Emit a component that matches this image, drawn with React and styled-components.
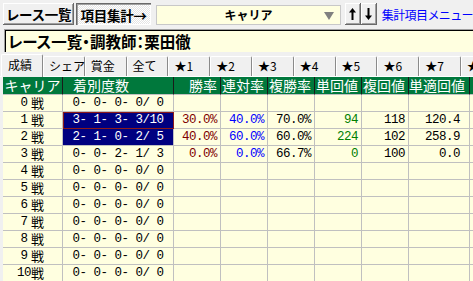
import styled, { createGlobalStyle } from "styled-components";

const GlobalStyle = createGlobalStyle`
  html, body {
    margin: 0;
    padding: 0;
    background: #f0f0f0;
    overflow: hidden;
  }
  body {
    font-family: "Noto Sans CJK JP", "Noto Sans", sans-serif;
  }
`;

const columns = [
  { label: "キャリア", width: 60, headAlign: "center" },
  { label: "着別度数", width: 111, headAlign: "left", headPad: 10 },
  { label: "勝率", width: 47, color: "#800000" },
  { label: "連対率", width: 47, color: "#0000ff" },
  { label: "複勝率", width: 47, color: "#000" },
  { label: "単回値", width: 47, color: "#008000" },
  { label: "複回値", width: 47, color: "#000" },
  { label: "単適回値", width: 61, color: "#000", pad: 9, headPad: 4 },
  { label: "", width: 40 },
];

const rows = [
  { count: "0", record: "0- 0- 0- 0/ 0", vals: [] },
  {
    count: "1",
    record: "3- 1- 3- 3/10",
    vals: ["30.0%", "40.0%", "70.0%", "94", "118", "120.4"],
    selected: true,
    focused: true,
  },
  {
    count: "2",
    record: "2- 1- 0- 2/ 5",
    vals: ["40.0%", "60.0%", "60.0%", "224", "102", "258.9"],
    selected: true,
  },
  { count: "3", record: "0- 0- 2- 1/ 3", vals: ["0.0%", "0.0%", "66.7%", "0", "100", "0.0"] },
  { count: "4", record: "0- 0- 0- 0/ 0", vals: [] },
  { count: "5", record: "0- 0- 0- 0/ 0", vals: [] },
  { count: "6", record: "0- 0- 0- 0/ 0", vals: [] },
  { count: "7", record: "0- 0- 0- 0/ 0", vals: [] },
  { count: "8", record: "0- 0- 0- 0/ 0", vals: [] },
  { count: "9", record: "0- 0- 0- 0/ 0", vals: [] },
  { count: "10", record: "0- 0- 0- 0/ 0", vals: [] },
];

const tabs = ["成績", "シェア", "賞金", "全て", "★1", "★2", "★3", "★4", "★5", "★6", "★7", "★8"];

const gridCols = columns.map((c) => `${c.width}px`).join(" ");

const UpArrow = () => (
  <svg width="7" height="12" viewBox="0 0 7 12">
    <polygon points="3.5,0 0,4.5 7,4.5" fill="#000" />
    <rect x="2.5" y="4" width="2" height="8" fill="#000" />
  </svg>
);

const DownArrow = () => (
  <svg width="7" height="12" viewBox="0 0 7 12">
    <polygon points="3.5,12 0,7.5 7,7.5" fill="#000" />
    <rect x="2.5" y="0" width="2" height="8" fill="#000" />
  </svg>
);

const App = () => {
  return (
    <Page>
      <GlobalStyle />
      <Toolbar>
        <ToolButton>レース一覧</ToolButton>
        <ToolButton $pressed>項目集計→</ToolButton>
        <Combo>
          <ComboText>キャリア</ComboText>
          <ComboArrow />
        </Combo>
        <ArrowPair>
          <ArrowButton>
            <UpArrow />
          </ArrowButton>
          <ArrowButton>
            <DownArrow />
          </ArrowButton>
        </ArrowPair>
        <MenuLink>集計項目メニュー</MenuLink>
      </Toolbar>
      <TitleBox>レース一覧・調教師：栗田徹</TitleBox>
      <TabBar>
        {tabs.map((t, i) => (
          <Tab key={t} $active={i === 0}>
            {t}
          </Tab>
        ))}
      </TabBar>
      <Grid>
        <Row>
          {columns.map((c, i) => (
            <HeadCell key={i} $align={c.headAlign || "right"} $pad={c.headPad ?? 3}>
              {c.label}
            </HeadCell>
          ))}
        </Row>
        {rows.map((r) => (
          <Row key={r.count}>
            <NameCell>
              <CountText>{r.count}</CountText>
              <SenText>戦</SenText>
            </NameCell>
            <RecordCell $selected={r.selected} $focused={r.focused}>
              {r.record}
            </RecordCell>
            {columns.slice(2, 8).map((c, i) => (
              <NumCell key={i} $color={c.color} $pad={c.pad ?? 3}>
                {r.vals[i] || ""}
              </NumCell>
            ))}
            <NumCell />
          </Row>
        ))}
      </Grid>
    </Page>
  );
};

export default App;

const Page = styled.div`
  width: 473px;
  height: 281px;
  overflow: hidden;
  background: #f0f0f0;
`;

const Toolbar = styled.div`
  display: flex;
  align-items: center;
  height: 22px;
  padding: 3px 0 0 3px;
  white-space: nowrap;
`;

const ToolButton = styled.div`
  box-sizing: border-box;
  height: 22px;
  width: ${(p) => (p.$pressed ? "76px" : "72px")};
  margin-right: ${(p) => (p.$pressed ? "5px" : "2px")};
  display: flex;
  align-items: center;
  justify-content: center;
  font-size: 13.5px;
  font-weight: 700;
  color: #000;
  letter-spacing: -0.3px;
  background: ${(p) =>
    p.$pressed
      ? "repeating-conic-gradient(#ffffff 0 25%, #e4e4e4 0 50%) 0 0 / 2px 2px"
      : "#f0f0f0"};
  box-shadow: ${(p) =>
    p.$pressed
      ? "inset 1px 1px #696969, inset 2px 2px #a0a0a0, inset -1px -1px #ffffff"
      : "inset -1px -1px #696969, inset 1px 1px #ffffff, inset -2px -2px #a0a0a0"};
  padding-top: ${(p) => (p.$pressed ? "1px" : "0")};
`;

const Combo = styled.div`
  box-sizing: border-box;
  position: relative;
  width: 187px;
  height: 20px;
  margin-top: 1px;
  background: #ffffe0;
  border: 1px solid #c8c8c8;
  display: flex;
  align-items: center;
  justify-content: center;
`;

const ComboText = styled.span`
  font-size: 12px;
  font-weight: 700;
  color: #000;
`;

const ComboArrow = styled.span`
  position: absolute;
  right: 6px;
  top: 6px;
  width: 0;
  height: 0;
  border-left: 5.5px solid transparent;
  border-right: 5.5px solid transparent;
  border-top: 8px solid #808080;
`;

const ArrowPair = styled.div`
  display: flex;
  margin-left: 4px;
`;

const ArrowButton = styled.div`
  box-sizing: border-box;
  width: 16px;
  height: 22px;
  display: flex;
  align-items: center;
  justify-content: center;
  background: #f0f0f0;
  box-shadow: inset -1px -1px #696969, inset 1px 1px #ffffff, inset -2px -2px #a0a0a0;
`;

const MenuLink = styled.div`
  margin-left: 5px;
  font-size: 12px;
  color: #0000ff;
  letter-spacing: -0.6px;
`;

const TitleBox = styled.div`
  box-sizing: border-box;
  margin: 4px 0 0 4px;
  height: 23px;
  width: 475px;
  background: #ffffe0;
  border-top: 1px solid #a0a0a0;
  border-left: 1px solid #a0a0a0;
  box-shadow: inset 1px 1px #000;
  padding-left: 3px;
  display: flex;
  align-items: center;
  font-size: 15.5px;
  font-weight: 700;
  color: #000;
  font-feature-settings: "palt";
  white-space: nowrap;
`;

const TabBar = styled.div`
  display: flex;
  align-items: flex-end;
  height: 24px;
  padding-left: 1px;
  border-bottom: 1px solid #ffffff;
  white-space: nowrap;
`;

const Tab = styled.div`
  box-sizing: border-box;
  flex: none;
  width: ${(p) => (p.$active ? "42px" : "41.8px")};
  height: ${(p) => (p.$active ? "23px" : "20px")};
  margin-bottom: ${(p) => (p.$active ? "-1px" : "0")};
  padding-left: ${(p) => (p.$active ? "6px" : "5px")};
  background: #f0f0f0;
  border-top: 1px solid #ffffff;
  border-left: 1px solid #ffffff;
  border-right: 1px solid #8a8a8a;
  border-radius: 2px 2px 0 0;
  font-size: 12px;
  line-height: ${(p) => (p.$active ? "19px" : "17px")};
  color: #000;
  position: relative;
  z-index: ${(p) => (p.$active ? 1 : 0)};
`;

const Grid = styled.div`
  margin-left: 3px;
  width: 470px;
`;

const Row = styled.div`
  display: grid;
  grid-template-columns: ${gridCols};
`;

const HeadCell = styled.div`
  box-sizing: border-box;
  height: 18px;
  background: #00783c;
  color: #ffffff;
  border-right: 1px solid #1a1a1a;
  border-bottom: 1px solid #c0c0c0;
  font-size: 14px;
  line-height: 17px;
  text-align: ${(p) => p.$align};
  padding: ${(p) =>
    p.$align === "right" ? `0 ${p.$pad}px 0 0` : p.$align === "left" ? `0 0 0 ${p.$pad}px` : "0"};
  white-space: nowrap;
  overflow: hidden;
`;

const BodyCell = styled.div`
  box-sizing: border-box;
  height: 17px;
  background: #ffffe0;
  border-right: 1px solid #c0c0c0;
  border-bottom: 1px solid #c0c0c0;
  line-height: 16px;
  white-space: pre;
  overflow: hidden;
`;

const NameCell = styled(BodyCell)`
  display: flex;
  align-items: center;
  padding-left: 14px;
  color: #000;
`;

const CountText = styled.span`
  flex: none;
  width: 14px;
  text-align: center;
  font-family: "Liberation Mono", monospace;
  font-size: 12.5px;
  letter-spacing: -0.5px;
`;

const SenText = styled.span`
  flex: none;
  font-family: "Noto Sans CJK JP", sans-serif;
  font-size: 13px;
`;

const RecordCell = styled(BodyCell)`
  font-family: "Liberation Mono", "Noto Sans CJK JP", monospace;
  font-size: 12.5px;
  letter-spacing: -0.5px;
  text-align: center;
  background: ${(p) => (p.$selected ? "#000080" : "#ffffe0")};
  color: ${(p) => (p.$selected ? "#ffffff" : "#000")};
  outline: ${(p) => (p.$focused ? "1px solid #8b1a1a" : "none")};
  outline-offset: -1px;
`;

const NumCell = styled(BodyCell)`
  font-family: "Liberation Mono", monospace;
  font-size: 12.5px;
  letter-spacing: -0.5px;
  text-align: right;
  padding-right: ${(p) => p.$pad || 3}px;
  color: ${(p) => p.$color || "#000"};
`;
